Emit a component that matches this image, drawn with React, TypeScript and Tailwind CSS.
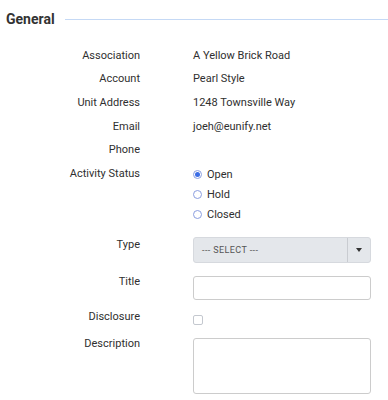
const font = { fontFamily: "Roboto, 'Noto Sans', sans-serif" };

function Row({ label, children, className = "" }: { label: string; children?: React.ReactNode; className?: string }) {
  return (
    <div className={`flex ${className}`}>
      <div className="w-[140px] shrink-0 text-right">{label}</div>
      <div className="ml-[53px] w-[178px]">{children}</div>
    </div>
  );
}

function Radio({ label, checked }: { label: string; checked?: boolean }) {
  return (
    <div className="flex h-5 items-center gap-[5px]">
      <span className="flex h-[9px] w-[9px] items-center justify-center rounded-full border border-[#8b9ee0] bg-white">
        {checked && <span className="h-[5px] w-[5px] rounded-full bg-[#3b6de6]" />}
      </span>
      <span>{label}</span>
    </div>
  );
}

export default function App() {
  return (
    <div className="h-[400px] w-[388px] bg-white text-[11px] leading-4 text-[#2f2f2f]" style={font}>
      <div className="flex items-center pt-[10px]">
        <h2 className="pl-[6px] text-[14px] font-bold leading-[18px] text-[#333]">General</h2>
        <div className="ml-[10px] h-px flex-1 bg-[#c5d9f5]" />
      </div>

      <div className="mt-[16px] flex flex-col">
        <Row label="Association" className="h-[23.6px] items-center">A Yellow Brick Road</Row>
        <Row label="Account" className="h-[23.6px] items-center">Pearl Style</Row>
        <Row label="Unit Address" className="h-[23.6px] items-center">1248 Townsville Way</Row>
        <Row label="Email" className="h-[23.6px] items-center">joeh@eunify.net</Row>
        <Row label="Phone" className="h-[23.6px] items-center" />
        <Row label="Activity Status" className="mt-[4px] items-start">
          <div className="-mt-[1px]">
            <Radio label="Open" checked />
            <Radio label="Hold" />
            <Radio label="Closed" />
          </div>
        </Row>

        <Row label="Type" className="mt-[12px] items-start">
          <div className="flex h-[26px] w-[178px] items-center rounded-[3px] border border-[#d6d9de] bg-[#e4e7eb]">
            <span className="flex-1 pl-[8px] text-[9px] tracking-[0.4px] text-[#555]">--- SELECT ---</span>
            <span className="flex h-full w-[23px] items-center justify-center border-l border-[#c9ccd1]">
              <svg width="6" height="4" viewBox="0 0 6 4">
                <path d="M0 0 H6 L3 4 Z" fill="#333" />
              </svg>
            </span>
          </div>
        </Row>

        <Row label="Title" className="mt-[11px] items-start">
          <div className="mt-[2px] h-[24px] w-[178px] rounded-[3px] border border-[#ccc] bg-white" />
        </Row>

        <Row label="Disclosure" className="mt-[9px] items-start">
          <div className="mt-[6px] h-[10px] w-[10px] rounded-[2px] border border-[#c4c8cf] bg-white" />
        </Row>

        <Row label="Description" className="mt-[11px] items-start">
          <div className="mt-[2px] h-[56px] w-[178px] rounded-[3px] border border-[#ccc] bg-white" />
        </Row>
      </div>
    </div>
  );
}
